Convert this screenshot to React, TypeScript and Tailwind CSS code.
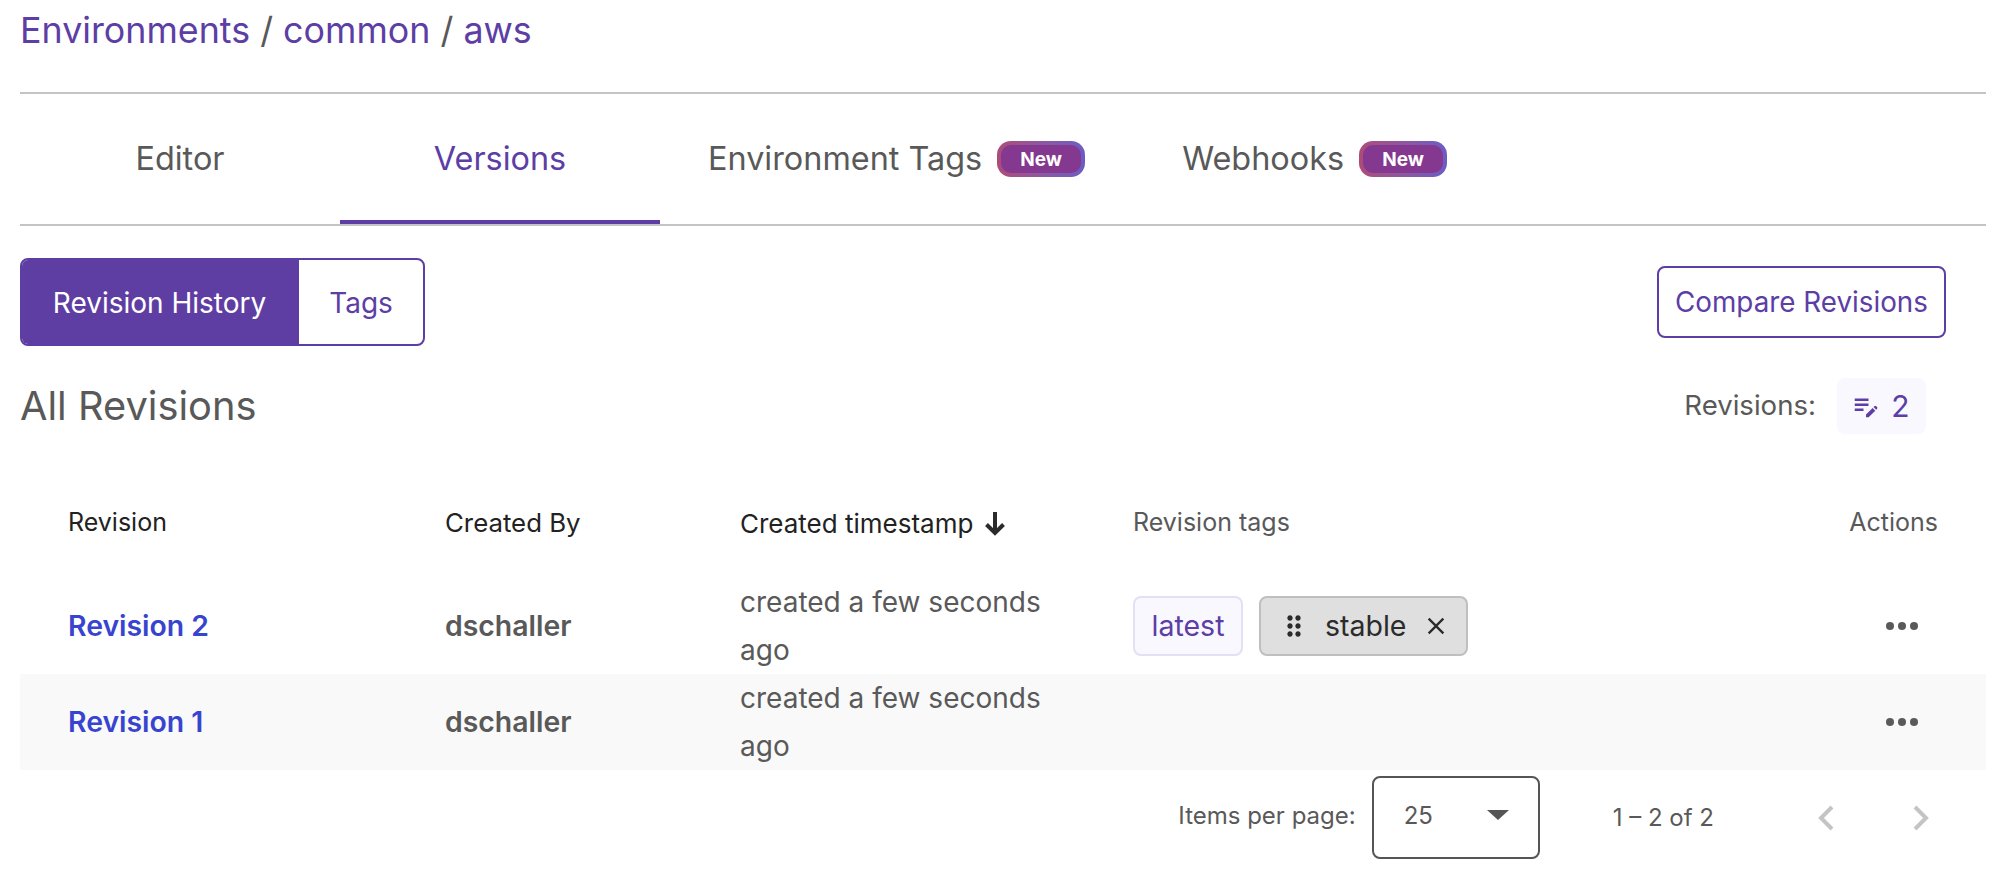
import React from "react";
import { MdEditNote, MdDragIndicator, MdClose } from "react-icons/md";

function NewBadge() {
  return (
    <span className="ml-[15px] flex h-[36px] w-[88px] items-center justify-center rounded-[14px] bg-gradient-to-r from-[#ad4b78] to-[#6a5cc4] p-[4px]">
      <span className="flex h-full w-full items-center justify-center rounded-[10px] bg-[#84388f] text-[19px] font-bold leading-none text-white">New</span>
    </span>
  );
}

function MoreDots() {
  return (
    <svg width="32" height="8" viewBox="0 0 32 8" fill="#5a5a5a">
      <circle cx="4" cy="4" r="4" />
      <circle cx="16" cy="4" r="4" />
      <circle cx="28" cy="4" r="4" />
    </svg>
  );
}

function Row({ name, tags, shaded }: { name: string; tags?: boolean; shaded?: boolean }) {
  return (
    <div className={`grid h-[96px] grid-cols-[377px_295px_393px_1fr] items-center pl-[48px] ${shaded ? "bg-[#f9f9f9]" : "bg-white"}`}>
      <a className="text-[28.4px] font-semibold text-[#3844d0]">{name}</a>
      <div className="text-[28.4px] font-semibold text-[#595959]">dschaller</div>
      <div className="w-[340px] text-[28px] leading-[48px] text-[#595959]">created a few seconds ago</div>
      <div className="flex items-center justify-between pr-[68px]">
        <div className="flex items-center gap-[16px]">
          {tags && (
            <>
              <span className="flex h-[60px] w-[110px] items-center justify-center rounded-[8px] border-2 border-[#e4dff3] bg-[#faf8ff] text-[28.5px] text-[#5c3ea5]">latest</span>
              <span className="flex h-[60px] w-[209px] items-center rounded-[8px] border-2 border-[#bfbfbf] bg-[#dfdfdf] pl-[17px] text-[28.5px] text-[#2b2b2b]">
                <MdDragIndicator size={32} />
                <span className="ml-[15px]">stable</span>
                <MdClose size={28} className="ml-[16px]" />
              </span>
            </>
          )}
        </div>
        <MoreDots />
      </div>
    </div>
  );
}

export default function App() {
  return (
    <div className="min-h-[886px] bg-white pl-[20px] pr-[18px] font-['Inter',sans-serif] text-[#595959]">
      <div className="h-[92px] text-[35.8px] leading-[60px]">
        <span className="text-[#5c3ea5]">Environments</span> / <span className="text-[#5c3ea5]">common</span> / <span className="text-[#5c3ea5]">aws</span>
      </div>

      <div className="flex h-[134px] items-stretch border-y-2 border-[#c4c4c4] text-[32.4px]">
        <div className="flex w-[320px] items-center justify-center">Editor</div>
        <div className="flex w-[320px] items-center justify-center border-y-[4px] border-t-transparent border-b-[#5c3ea5] text-[#5c3ea5]">Versions</div>
        <div className="ml-[48px] flex items-center">
          Environment Tags
          <NewBadge />
        </div>
        <div className="ml-[97px] flex items-center">
          Webhooks
          <NewBadge />
        </div>
      </div>

      <div className="flex items-center justify-between pr-[40px] pt-[32px]">
        <div className="flex h-[88px] w-[405px] overflow-hidden rounded-[8px] border-2 border-[#5c3ea5] text-[28px]">
          <div className="flex w-[277px] items-center justify-center bg-[#5f3ea3] pr-[2px] pt-[2px] text-white">Revision History</div>
          <div className="flex flex-1 items-center justify-center pt-[2px] text-[#5c3ea5]">Tags</div>
        </div>
        <button className="flex h-[72px] w-[289px] items-center justify-center rounded-[8px] border-2 border-[#5c3ea5] pt-[2px] text-[27.8px] text-[#5c3ea5]">Compare Revisions</button>
      </div>

      <div className="flex h-[120px] items-center justify-between pr-[60px]">
        <h2 className="text-[39.8px]">All Revisions</h2>
        <div className="flex items-center">
          <span className="text-[27.6px]">Revisions:</span>
          <span className="ml-[21px] flex h-[56px] w-[89px] items-center justify-center gap-[10px] rounded-[8px] bg-[#faf8ff] pr-[2px] text-[30px] text-[#5c3ea5]">
            <MdEditNote size={30} />
            2
          </span>
        </div>
      </div>

      <div className="grid h-[112px] grid-cols-[377px_295px_393px_1fr] items-center pl-[48px] pt-[2px] text-[25px] text-[#222222]">
        <div>Revision</div>
        <div className="text-[25.8px]">Created By</div>
        <div className="flex items-center gap-[12px] text-[26px]">
          Created timestamp
          <svg width="20" height="24" viewBox="0 0 20 24" fill="none" stroke="#2b2b2b" strokeWidth="4" className="mt-[2px]">
            <path d="M10 0V21" />
            <path d="M1.5 12.5L10 21L18.500 12.5" />
          </svg>
        </div>
        <div className="flex items-center justify-between pr-[48px] text-[#595959]">
          <span>Revision tags</span>
          <span>Actions</span>
        </div>
      </div>

      <Row name="Revision 2" tags />
      <Row name="Revision 1" shaded />

      <div className="flex items-start justify-end pr-[57px] pt-[6px] text-[24px]">
        <span className="mr-[16px] leading-[80px]">Items per page:</span>
        <div className="flex h-[83px] w-[168px] items-start justify-between rounded-[8px] border-2 border-[#555555] pl-[30px] pr-[29px] pt-[20px]">
          <span>25</span>
          <svg width="22" height="10" viewBox="0 0 22 10" className="mt-[12px]">
            <polygon points="0,0 22,0 11,10" fill="#555555" />
          </svg>
        </div>
        <span className="ml-[73px] leading-[84px]">1 – 2 of 2</span>
        <svg width="16" height="26" viewBox="0 0 16 26" fill="none" stroke="#c4c4c4" strokeWidth="4" className="ml-[104px] mt-[29px]">
          <path d="M14 2L3 13L14 24" />
        </svg>
        <svg width="16" height="26" viewBox="0 0 16 26" fill="none" stroke="#c4c4c4" strokeWidth="4" className="ml-[79px] mt-[29px]">
          <path d="M2 2L13 13L2 24" />
        </svg>
      </div>
    </div>
  );
}
